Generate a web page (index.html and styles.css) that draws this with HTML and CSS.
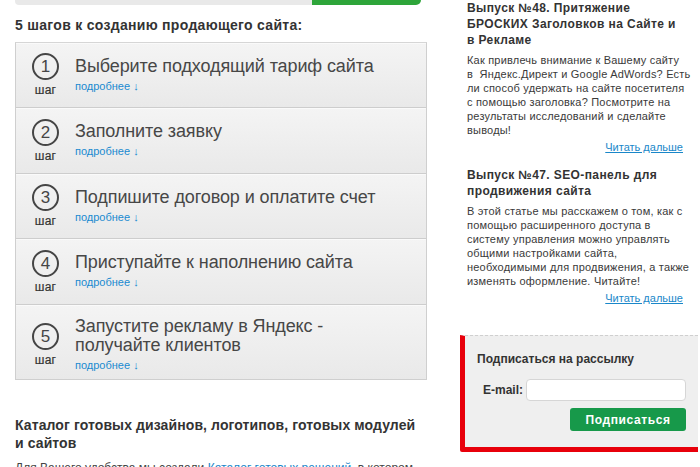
FILE: index.html
```html
<!DOCTYPE html>
<html lang="ru">
<head>
<meta charset="utf-8">
<title>5 шагов к созданию продающего сайта</title>
<link rel="stylesheet" href="styles.css">
</head>
<body>
<div class="page">
  <div class="main">
    <div class="topbar"><span class="topbar-gray"></span><span class="topbar-green"></span></div>
    <h2 class="steps-title">5 шагов к созданию продающего сайта:</h2>
    <ul class="steps">
      <li class="step">
        <div class="step-num"><span class="circle">1</span><span class="step-word">шаг</span></div>
        <div class="step-body"><div class="step-name">Выберите подходящий тариф сайта</div><a class="more" href="#">подробнее ↓</a></div>
      </li>
      <li class="step">
        <div class="step-num"><span class="circle">2</span><span class="step-word">шаг</span></div>
        <div class="step-body"><div class="step-name">Заполните заявку</div><a class="more" href="#">подробнее ↓</a></div>
      </li>
      <li class="step">
        <div class="step-num"><span class="circle">3</span><span class="step-word">шаг</span></div>
        <div class="step-body"><div class="step-name">Подпишите договор и оплатите счет</div><a class="more" href="#">подробнее ↓</a></div>
      </li>
      <li class="step">
        <div class="step-num"><span class="circle">4</span><span class="step-word">шаг</span></div>
        <div class="step-body"><div class="step-name">Приступайте к наполнению сайта</div><a class="more" href="#">подробнее ↓</a></div>
      </li>
      <li class="step">
        <div class="step-num"><span class="circle">5</span><span class="step-word">шаг</span></div>
        <div class="step-body"><div class="step-name">Запустите рекламу в Яндекс -<br>получайте клиентов</div><a class="more" href="#">подробнее ↓</a></div>
      </li>
    </ul>
    <h2 class="catalog-title">Каталог готовых дизайнов, логотипов, готовых модулей<br>и сайтов</h2>
    <p class="catalog-text">Для Вашего удобства мы создали <a href="#">Каталог готовых решений</a>, в котором</p>
  </div>
  <div class="side">
    <div class="article">
      <h3 class="article-title">Выпуск №48. Притяжение<br>БРОСКИХ Заголовков на Сайте и<br>в Рекламе</h3>
      <p class="article-text">Как привлечь внимание к Вашему сайту<br>в&nbsp; Яндекс.Директ и Google AdWords? Есть<br>ли способ удержать на сайте посетителя<br>с помощью заголовка? Посмотрите на<br>результаты исследований и сделайте<br>выводы!</p>
      <div class="article-more"><a href="#">Читать дальше</a></div>
    </div>
    <div class="article">
      <h3 class="article-title">Выпуск №47. SEO-панель для<br>продвижения сайта</h3>
      <p class="article-text">В этой статье мы расскажем о том, как с<br>помощью расширенного доступа в<br>систему управления можно управлять<br>общими настройками сайта,<br>необходимыми для продвижения, а также<br>изменять оформление. Читайте!</p>
      <div class="article-more"><a href="#">Читать дальше</a></div>
    </div>
    <form class="subscribe">
      <div class="subscribe-title">Подписаться на рассылку</div>
      <label class="email-row"><span class="email-label">E-mail:</span><input class="email-input" type="text"></label>
      <div class="btn-row"><button class="btn" type="button">Подписаться</button></div>
    </form>
  </div>
</div>
</body>
</html>
```

FILE: styles.css
```css
* { box-sizing: border-box; }
html, body { margin: 0; padding: 0; background: #fff; }
body {
  font-family: "Liberation Sans", Arial, sans-serif;
  color: #333;
  width: 700px;
  height: 467px;
  overflow: hidden;
}
a { color: #1a87c9; }

.page { display: flex; align-items: flex-start; }

.main { width: 412px; margin-left: 15px; flex: none; }

.topbar { display: flex; height: 5px; width: 406px; }
.topbar-gray { flex: none; width: 297px; background: #e9e9e9; border-bottom-left-radius: 4px; }
.topbar-green { flex: none; width: 109px; background: #2ea53a; border-bottom-right-radius: 5px; }

.steps-title {
  margin: 12px 0 8px;
  font-size: 14px;
  line-height: 17px;
  font-weight: bold;
  letter-spacing: 0.3px;
  color: #333;
}

.steps {
  list-style: none;
  margin: 0;
  padding: 0;
  border: 1px solid #cfcfcf;
  border-top-color: #d6d6d6;
}
.step {
  display: flex;
  align-items: center;
  min-height: 65px;
  padding: 9px 0;
  background: linear-gradient(#f4f4f4, #e9e9e9);
  border-top: 1px solid #cdcdcd;
  box-shadow: inset 0 1px 0 #fafafa;
}
.step:first-child { border-top: 0; min-height: 64px; }
.step:nth-child(2), .step:nth-child(4) { min-height: 66px; }
.step:last-child { min-height: 73px; padding: 12px 0 6px; }

.step-num {
  flex: none;
  width: 58px;
  display: flex;
  flex-direction: column;
  align-items: center;
  padding-left: 1px;
}
.circle {
  width: 27px;
  height: 27px;
  border: 2px solid #454545;
  border-radius: 50%;
  display: flex;
  align-items: center;
  justify-content: center;
  font-size: 17px;
  color: #454545;
  line-height: 1;
}
.step-word {
  margin-top: 3px;
  font-size: 12px;
  line-height: 14px;
  color: #333;
  letter-spacing: 0.3px;
  -webkit-text-stroke: 0.2px #333;
}
.step-body { padding-left: 1px; }
.step-name {
  font-size: 18px;
  line-height: 19px;
  color: #474747;
  letter-spacing: -0.1px;
}
.more {
  display: inline-block;
  margin-top: 3px;
  font-size: 11px;
  line-height: 13px;
  color: #1a8ad0;
  text-decoration: none;
}

.catalog-title {
  margin: 36px 0 0;
  font-size: 14px;
  line-height: 18px;
  font-weight: bold;
  letter-spacing: 0.1px;
  color: #333;
}
.catalog-text {
  margin: 8px 0 0;
  font-size: 12px;
  line-height: 16px;
  color: #444;
}
.catalog-text a { color: #1a87c9; }

.side { width: 240px; margin-left: 33px; flex: none; }

.article { padding: 0 13px 0 7px; }
.article + .article { margin-top: 13px; }
.article-title {
  margin: 0;
  font-size: 12px;
  line-height: 16px;
  font-weight: bold;
  letter-spacing: 0.4px;
  color: #333;
  white-space: nowrap;
}
.article-text {
  margin: 5px 0 0;
  font-size: 11px;
  line-height: 14px;
  letter-spacing: 0.2px;
  color: #3a3a3a;
  white-space: nowrap;
}
.article-more {
  margin-top: 3px;
  text-align: right;
  font-size: 11px;
  line-height: 14px;
  padding-right: 4px;
}
.article-more a { color: #1a87c9; text-decoration: underline; }

.subscribe {
  margin: 30px 2px 0 0;
  height: 117px;
  background: #efefef;
  border-top: 1px dashed #cfcfcf;
  border-left: 5px solid #e8000b;
  border-bottom: 5px solid #e8000b;
  border-bottom-left-radius: 2px;
  padding: 16px 12px 0 12px;
}
.subscribe-title {
  font-size: 12px;
  line-height: 15px;
  font-weight: bold;
  color: #333;
}
.email-row {
  display: flex;
  align-items: center;
  margin-top: 12px;
  padding-left: 6px;
}
.email-label {
  flex: none;
  white-space: nowrap;
  font-size: 12px;
  font-weight: bold;
  color: #333;
  margin-right: 3px;
}
.email-input {
  flex: 1;
  min-width: 0;
  height: 22px;
  border: 1px solid #d6d6d6;
  border-radius: 4px;
  background: #fff;
  padding: 0 4px;
  font: 12px "Liberation Sans", Arial, sans-serif;
}
.btn-row { display: flex; justify-content: flex-end; margin-top: 7px; }
.btn {
  width: 116px;
  height: 23px;
  border: 0;
  border-radius: 3px;
  background: #17994a;
  color: #fff;
  font: bold 12px "Liberation Sans", Arial, sans-serif;
  letter-spacing: 0.6px;
  padding: 0;
}
```
